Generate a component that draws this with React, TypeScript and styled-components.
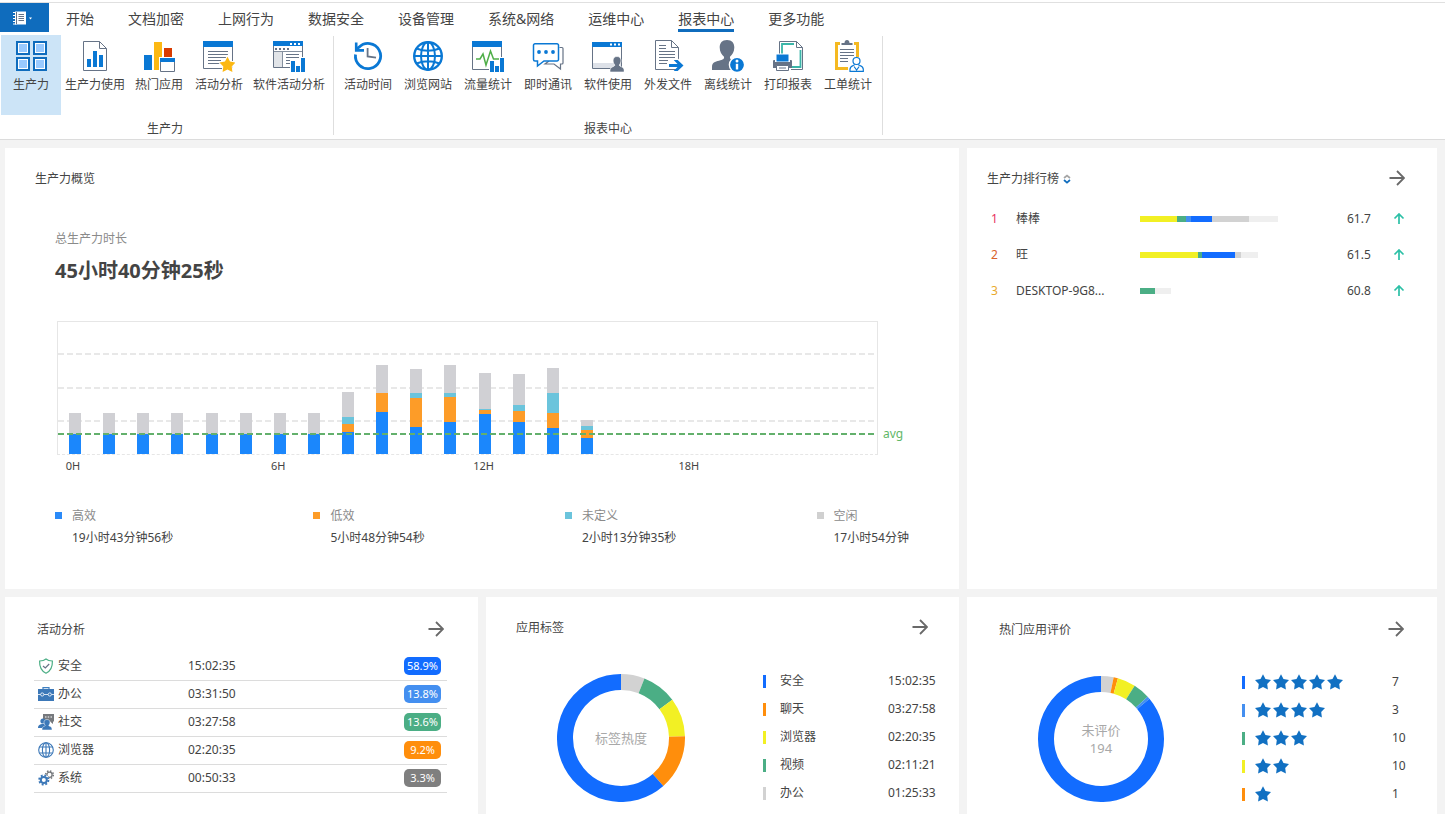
import React from "react";
import styled, { createGlobalStyle } from "styled-components";

const color = {
  text: "#444444",
  muted: "#8a8a8a",
  brand: "#0f6cbd",
  icon: "#0a78d4",
  slate: "#667386",
  blue: "#126cff",
  lightBlue: "#448ff0",
  green: "#4bae85",
  yellow: "#f2f024",
  orange: "#ff8e0c",
  gray: "#d2d2d2",
  pale: "#efefef",
};

const GlobalStyle = createGlobalStyle`
  *, *::before, *::after { box-sizing: border-box; }
  body {
    margin: 0;
    background: #f3f3f3;
    color: ${color.text};
    font: 12px/16px "Noto Sans", "Noto Sans CJK SC", sans-serif;
  }
  button { font: inherit; color: inherit; border: 0; padding: 0; background: none; cursor: pointer; }
  h2, p, dl, dd { margin: 0; font-size: inherit; font-weight: inherit; }
  table { border-collapse: collapse; table-layout: fixed; width: 100%; }
  td { padding: 0; }
  svg { display: block; }
`;

/* ---------- page frame ---------- */

const Page = styled.div`
  min-height: 100vh;
  display: flex;
  flex-direction: column;
`;

const Ribbon = styled.header`
  background: #fff;
  padding-top: 2px;
  border-bottom: 1px solid #dcdcdc;
`;

const MenuBar = styled.nav`
  display: flex;
  height: 33px;
  border-top: 1px solid #e0e0e0;
  padding-bottom: 3px;
`;

const FileButton = styled.button`
  width: 49px;
  padding-left: 12px;
  background: ${color.brand};
`;

const MenuItem = styled.button`
  display: flex;
  padding: 0 17px;
  font-size: 14px;
  line-height: 32px;
`;

const MenuLabel = styled.span<{ $active?: boolean }>`
  height: 29px;
  border-bottom: 3px solid ${(p) => (p.$active ? color.brand : "transparent")};
`;

const Groups = styled.div`
  display: flex;
  padding-left: 1px;
`;

const Group = styled.section<{ $first?: boolean }>`
  height: 104px;
  padding: 0 5px 0 ${(p) => (p.$first ? 0 : 4)}px;
  background: linear-gradient(#dedede, #dedede) right 1px / 1px 99px no-repeat;
`;

const Tools = styled.div`
  display: flex;
`;

const Tool = styled.button<{ $active?: boolean }>`
  display: flex;
  flex-direction: column;
  align-items: center;
  gap: 5px;
  min-width: 60px;
  height: 80px;
  padding: 5px 4px 0;
  white-space: nowrap;
  background: ${(p) => (p.$active ? "#cce4f7" : "transparent")};
`;

const GroupName = styled.p`
  text-align: center;
  padding-top: 6px;
`;

const Dashboard = styled.main`
  flex: 1;
  display: grid;
  grid-template-columns: 473fr 473fr 470fr;
  grid-template-rows: auto 1fr;
  gap: 8px;
  padding: 8px 8px 0 5px;
`;

const Card = styled.section<{ $wide?: boolean; $pad: string }>`
  background: #fff;
  min-width: 0;
  grid-column: ${(p) => (p.$wide ? "span 2" : "auto")};
  padding: ${(p) => p.$pad};
`;

const CardHead = styled.header<{ $inset: string }>`
  display: flex;
  align-items: center;
  justify-content: space-between;
  height: 24px;
  padding: ${(p) => p.$inset};
`;

const CardTitle = styled.h2`
  display: flex;
  align-items: center;
  gap: 4px;
  padding-top: 2px;
`;

/* ---------- overview ---------- */

const Overview = styled.div`
  padding: 41px 20px 0;
`;

const Caption = styled.p`
  color: ${color.muted};
`;

const Total = styled.p`
  font-size: 20px;
  line-height: 28px;
  font-weight: 700;
  margin-top: 10px;
`;

const ChartRow = styled.div`
  display: flex;
  gap: 5px;
  margin: 36px 0 0 2px;
  padding-right: 4px;
`;

const ChartBody = styled.div`
  flex: 1;
`;

const Plot = styled.div`
  position: relative;
  display: flex;
  align-items: flex-end;
  height: 134px;
  border: 1px solid #e6e6e6;
  border-bottom-style: dashed;
`;

const GridLine = styled.i<{ $top: number; $tone: string }>`
  position: absolute;
  left: 0;
  right: 0;
  top: ${(p) => p.$top}px;
  height: 2px;
  background: repeating-linear-gradient(90deg, ${(p) => p.$tone} 0 6px, transparent 6px 9px);
`;

// Positioned so that the bars paint over the grid lines that precede them.
const Hour = styled.div`
  position: relative;
  flex: 1;
  display: flex;
  flex-direction: column;
  align-items: center;
`;

const Segment = styled.span<{ $tone: string }>`
  width: 12px;
  background: ${(p) => p.$tone};
`;

const Axis = styled.div`
  display: flex;
  margin-top: 3px;
  font-size: 11px;
`;

const Tick = styled.div`
  flex: 1;
`;

const TickLabel = styled.span`
  display: block;
  width: 32px;
  text-align: center;
`;

const AvgLabel = styled.span`
  color: #5fb768;
  margin-top: 105px;
  width: 22px;
`;

const Summary = styled.dl`
  display: flex;
  justify-content: space-between;
  margin-top: 34px;
`;

const SummaryItem = styled.div<{ $tone: string }>`
  padding-left: 17px;
  background: linear-gradient(${(p) => p.$tone}, ${(p) => p.$tone}) 0 4px / 7px 7px no-repeat;
  dt { color: ${color.muted}; }
  dd { margin-top: 6px; }
`;

/* ---------- ranking ---------- */

const RankTable = styled.table`
  margin-top: 11px;
  td { height: 36px; }
`;

const Rank = styled.td<{ $tone: string }>`
  width: 29px;
  padding-right: 14px;
  text-align: center;
  color: ${(p) => p.$tone};
`;

const Name = styled.td`
  width: 124px;
`;

const Score = styled.td`
  width: 46px;
`;

const Trend = styled.td`
  width: 12px;
`;

const Meter = styled.div`
  display: flex;
  height: 6px;
`;

const MeterPart = styled.span<{ $tone: string }>`
  background: ${(p) => p.$tone};
`;

/* ---------- activity ---------- */

const ActivityTable = styled.table`
  margin-top: 11px;
  td { height: 28px; border-bottom: 1px solid #dcdcdc; }
`;

const ActivityName = styled.td`
  width: 154px;
  padding-left: 4px;
`;

const IconText = styled.span`
  display: flex;
  align-items: center;
  gap: 4px;
`;

const BadgeCell = styled.td`
  width: 43px;
  padding-right: 6px;
`;

const Badge = styled.span<{ $tone: string }>`
  display: block;
  height: 18px;
  border-radius: 5px;
  color: #fff;
  font-size: 11px;
  line-height: 18px;
  text-align: center;
  background: ${(p) => p.$tone};
`;

/* ---------- donuts ---------- */

const DonutRow = styled.div<{ $gap: number; $top: number }>`
  display: flex;
  justify-content: space-between;
  padding-left: ${(p) => p.$gap}px;
  margin-top: ${(p) => p.$top}px;
`;

const DonutBox = styled.div`
  display: grid;
  place-items: center;
  width: 128px;
  height: 128px;
  margin-top: 7px;
  flex: none;
  > * { grid-area: 1 / 1; }
`;

const DonutText = styled.p`
  color: #a8a8a8;
  font-size: 13px;
  line-height: 18px;
  text-align: center;
`;

const LegendTable = styled.table<{ $width: number }>`
  width: ${(p) => p.$width}px;
  align-self: flex-start;
  td { height: 28px; }
`;

const KeyCell = styled.td<{ $width: number }>`
  width: ${(p) => p.$width}px;
`;

const Key = styled.span<{ $tone: string }>`
  display: block;
  width: 3px;
  height: 13px;
  background: ${(p) => p.$tone};
`;

const ValueCell = styled.td<{ $width: number }>`
  width: ${(p) => p.$width}px;
`;

const Stars = styled.span`
  display: flex;
  gap: 2px;
`;

/* ---------- ribbon icons ---------- */

const S = color.slate;
const B = color.icon;

const RibbonSvg = ({ children }: { children: React.ReactNode }) => (
  <svg width="32" height="32" viewBox="0 0 32 32" fill="none" aria-hidden="true">
    {children}
  </svg>
);

const lines = (ys: number[], x1: number, x2: number) => (
  <path d={ys.map((y) => `M${x1} ${y}H${x2}`).join("")} stroke={S} strokeWidth="1" />
);

const STAR = "M8 0.2L10.5 5L16 6L12.2 9.9L12.9 15.5L8 13L3.1 15.5L3.8 9.9L0 6L5.5 5Z";

const TilesIcon = () => (
  <RibbonSvg>
    {[2, 19].map((x) =>
      [2, 18].map((y) => (
        <g key={`${x}-${y}`}>
          <rect x={x} y={y} width="12" height="12" fill="#fff" stroke={color.brand} strokeWidth="2" />
          <rect x={x + 2} y={y + 2} width="8" height="8" fill="#99caff" />
        </g>
      ))
    )}
  </RibbonSvg>
);

const ReportIcon = () => (
  <RibbonSvg>
    <path d="M4.5 1.5H20.5L27.5 8.5V30.5H4.5Z" fill="#fff" stroke={S} />
    <path d="M20.5 1.5V8.5H27.5" stroke={S} />
    <path d="M8 19h4v8H8zM14 11h4v16h-4zM20 15h4v12h-4z" fill={B} />
  </RibbonSvg>
);

const HotAppIcon = () => (
  <RibbonSvg>
    <path d="M1 15h8v15H1z" fill={B} />
    <path d="M11 2h8v28h-8z" fill="#fcb813" />
    <path d="M21 8h8v9h-8z" fill="#d83b01" />
    <path d="M16 17h16v15H16z" fill="#fff" />
    <path d="M17.5 18.5h14v13h-14z" fill="#fff" stroke={S} />
    <path d="M17 18h15v4H17z" fill={B} />
  </RibbonSvg>
);

const ActivityIcon = () => (
  <RibbonSvg>
    <path d="M.5 1.5h29v27H.5z" fill="#fff" stroke={S} />
    <path d="M0 1h30v6H0z" fill={B} />
    {lines([11.5, 14.5, 17.5], 5, 25)}
    {lines([20.5, 23.5], 5, 18)}
    <g transform="translate(16.5 16.5)">
      <path d={STAR} fill="#fcb813" stroke="#fff" strokeWidth="2" />
      <path d={STAR} fill="#fcb813" />
    </g>
  </RibbonSvg>
);

const MiniBars = () => (
  <>
    <path d="M17 20h6v5h4v-8h5v15H17z" fill="#fff" />
    <path d="M18 21h4v11h-4zM23 26h4v6h-4zM28 18h4v14h-4z" fill={B} />
  </>
);

const SoftwareActivityIcon = () => (
  <RibbonSvg>
    <path d="M.5 1.5h29v26H.5z" fill="#fff" stroke={S} />
    <path d="M1 12h8v15H1z" fill="#e1e4e8" />
    <path d="M0 1h30v5H0z" fill={B} />
    <path d="M17 3h2v2h-2zM21 3h2v2h-2zM25 3h2v2h-2z" fill="#fff" />
    <path d="M2 8h2v2H2zM6 8h2v2H6zM10 8h2v2h-2zM14 8h2v2h-2z" fill={S} />
    <path d="M1 11.5H29M9.5 12V27" stroke={S} strokeWidth=".8" />
    {lines([14.5, 17.5], 13, 26)}
    {lines([20.5, 23.5], 13, 17)}
    <MiniBars />
  </RibbonSvg>
);

const HistoryIcon = () => (
  <RibbonSvg>
    <path d="M3.5 14.5A12.6 12.6 0 1 0 7 7.2L4 9.5" stroke={B} strokeWidth="2.8" />
    <path d="M4.2 2.5V10.4H12" stroke={B} strokeWidth="2.6" />
    <path d="M15.6 8V16.4L24 17.6" stroke={S} strokeWidth="1.8" />
  </RibbonSvg>
);

const GlobeIcon = () => (
  <RibbonSvg>
    <g stroke={B} strokeWidth="2">
      <circle cx="16" cy="16" r="13.8" strokeWidth="2.4" />
      <ellipse cx="16" cy="16" rx="7" ry="13.8" />
      <path d="M16 2V30M2 16H30M4.5 8.5Q16 13 27.5 8.5M4.5 23.5Q16 19 27.5 23.5" />
    </g>
  </RibbonSvg>
);

const TrafficIcon = () => (
  <RibbonSvg>
    <path d="M.5 1.5h29v28H.5z" fill="#fff" stroke={S} />
    <path d="M0 1h30v6H0z" fill={B} />
    <path d="M4 19H8L11 14L14 25L18.5 11L21.5 19H27" stroke="#4fae48" strokeWidth="1.5" />
    <MiniBars />
  </RibbonSvg>
);

const ChatIcon = () => (
  <RibbonSvg>
    <path d="M27.5 7.5H30a1 1 0 0 1 1 1V23a1 1 0 0 1-1 1H28.5V29L22 24H13L17 21" stroke={S} strokeWidth="1.2" fill="#fff" />
    <path
      d="M3 3.8H25a1.5 1.5 0 0 1 1.5 1.5V19.5a1.5 1.5 0 0 1-1.5 1.5H12L5.5 26V21H3a1.5 1.5 0 0 1-1.5-1.5V5.3A1.5 1.5 0 0 1 3 3.8Z"
      fill="#fff"
      stroke={B}
      strokeWidth="1.5"
    />
    <g fill={B}>
      <circle cx="7" cy="12" r="1.9" />
      <circle cx="14" cy="12" r="1.9" />
      <circle cx="21" cy="12" r="1.9" />
    </g>
  </RibbonSvg>
);

const SoftwareUseIcon = () => (
  <RibbonSvg>
    <path d="M.5 2.5h29v26H.5z" fill="#fff" stroke={S} />
    <path d="M1 23h28v5H1z" fill="#dde1e8" />
    <path d="M0 2h30v5H0z" fill={B} />
    <path d="M18 3.5h2v2h-2zM22 3.5h2v2h-2zM26 3.5h2v2h-2z" fill="#fff" />
    <path
      d="M25 16.5c2.9 0 4 2 4 4.3 0 1.8-.9 3.3-1.9 4.2 0 1.8 5.1 1.6 5.1 5V32H18v-2c0-3.4 5-3.2 5-5-1-.9-1.9-2.4-1.9-4.2 0-2.3 1-4.3 3.9-4.3Z"
      fill={S}
      stroke="#fff"
      strokeWidth=".6"
    />
  </RibbonSvg>
);

const SendFileIcon = () => (
  <RibbonSvg>
    <path d="M3.5 .5H19.5L26.5 7.5V29.5H3.5Z" fill="#fff" stroke={S} />
    <path d="M19.5 .5V7.5H26.5" stroke={S} />
    {lines([5.5, 8.5], 7, 14)}
    {lines([11.5, 14.5, 17.5], 7, 23)}
    {lines([20.5, 23.5], 7, 16)}
    <path d="M15 23h9M24 18l8 7.5-8 7" stroke="#fff" strokeWidth="2" />
    <path d="M17 24h8.5l-3.8-4h4l5.8 5.5-5.8 5.5h-4l3.8-4H17z" fill={B} />
  </RibbonSvg>
);

const OfflineIcon = () => (
  <RibbonSvg>
    <path
      d="M15 0c5 0 7.3 3 7.3 7.5 0 4-2 7.5-4.3 9.2-.5 2 .8 3 4 4 3 1 5.5 2 5.5 6V30H0v-3c0-4.5 3-5.3 7-6.3 4-1 5.5-2 5-4C9.7 15 7.7 11.5 7.7 7.5 7.7 3 10 0 15 0Z"
      fill={S}
    />
    <circle cx="25" cy="24.8" r="7.6" fill={B} stroke="#fff" strokeWidth="1.4" />
    <circle cx="25" cy="21" r="1.5" fill="#fff" />
    <path d="M25 23.8V29.5" stroke="#fff" strokeWidth="2.4" />
  </RibbonSvg>
);

const PrintIcon = () => (
  <RibbonSvg>
    <path d="M7.5 14V1.5H24.5L30.5 7.5V29.5H19" fill="#fff" stroke={S} />
    <path d="M10 14V4H22M28.5 10V27H20" stroke="#3ab5a8" strokeWidth="1.8" />
    <path d="M24.5 1.5V7.5H30.5" stroke={S} />
    <path d="M0 20h20v9H0z" fill="#fff" />
    <path d="M4 14h13v8H4z" fill={B} stroke="#fff" />
    <path d="M1 21a1 1 0 0 1 1-1h1v2h15v-2h1a1 1 0 0 1 1 1v7H1z" fill={S} />
    <path d="M4.5 25.5h12v5h-12z" fill="#fff" stroke={S} />
    <path d="M7 28h7" stroke={S} />
  </RibbonSvg>
);

const TicketIcon = () => (
  <RibbonSvg>
    <path d="M4.5 3.5h21v25h-21z" fill="#fff" stroke="#f5b921" strokeWidth="3" />
    <path d="M8 2h14v4H8z" fill="#fff" />
    <path d="M9.5 5V3h3c0-2 1-3 2.500-3s2.500 1 2.500 3h3v2z" fill={S} />
    {lines([9.5, 12.5, 15.5], 8, 22)}
    {lines([18.5, 21.5], 8, 18)}
    <path d="M16 17h16v15H16z" fill="#fff" />
    <circle cx="24.5" cy="21" r="3.5" stroke={B} strokeWidth="1.2" />
    <path
      d="M22.8 24.5C22 25.8 18 25.7 18 29.2V31.3H31.3V29.2C31.3 25.7 27 25.8 26.2 24.5M22 26.5L24.6 30L27.2 26.5"
      stroke={B}
      strokeWidth="1.2"
    />
  </RibbonSvg>
);

/* ---------- small icons ---------- */

const SmallSvg = ({ children }: { children: React.ReactNode }) => (
  <svg width="16" height="16" viewBox="0 0 16 16" fill="none" aria-hidden="true">
    {children}
  </svg>
);

const ShieldIcon = () => (
  <SmallSvg>
    <path
      d="M8 1C6.5 2.3 4 3 1.6 3 1.4 8.5 2.8 12.8 8 15.2 13.2 12.8 14.6 8.5 14.4 3 12 3 9.5 2.3 8 1Z"
      stroke="#4bae85"
      strokeWidth="1.2"
    />
    <path d="M5 8L7.3 10L11.2 6" stroke={S} strokeWidth="1.2" />
  </SmallSvg>
);

const BriefcaseIcon = () => (
  <SmallSvg>
    <path d="M5 3V1.6H11V3" stroke="#3f7fc0" strokeWidth="1.2" />
    <path d="M0 3h16v12H0z" fill="#3c78b8" />
    <g stroke="#fff" strokeWidth=".8">
      <path d="M0 8.5H2.5M6 8.5H10M13.5 8.5H16" />
      <circle cx="4.2" cy="8.5" r="1.6" />
      <circle cx="11.8" cy="8.5" r="1.6" />
    </g>
  </SmallSvg>
);

const SocialIcon = () => (
  <SmallSvg>
    <path d="M5 0h11v7.5h-1V10l-3-2.5H5z" fill="#76797d" />
    <path d="M7 3h1.5M9.7 3h1.5M12.5 3H14" stroke="#fff" />
    <circle cx="5" cy="7" r="2.6" fill="#3c78b8" />
    <path d="M0 14c0-3 2-4 5-4s3 1 3 4z" fill="#3c78b8" />
    <path
      d="M9 5.5c2 0 3 1.2 3 2.8s-.8 2.6-1.3 3.2c.4 1 3.3.8 3.3 3.5v1H4v-1c0-2.7 2.9-2.5 3.3-3.5C6.8 10.9 6 9.9 6 8.3s1-2.8 3-2.8Z"
      fill="#3c78b8"
      stroke="#fff"
      strokeWidth=".5"
    />
  </SmallSvg>
);

const SmallGlobeIcon = () => (
  <SmallSvg>
    <g stroke="#3c78b8" strokeWidth="1.1">
      <circle cx="8" cy="8" r="7.3" />
      <ellipse cx="8" cy="8" rx="3.6" ry="7.3" />
      <path d="M8 .7V15.3M1.5 5H14.5M1.5 11H14.5" />
    </g>
  </SmallSvg>
);

const GearsIcon = () => (
  <SmallSvg>
    <circle cx="11.5" cy="4.8" r="3.8" stroke="#76797d" strokeWidth="1.6" strokeDasharray="1.5 1.48" />
    <circle cx="11.5" cy="4.8" r="2.6" stroke="#76797d" strokeWidth="1.3" />
    <circle cx="5.8" cy="10" r="5.6" fill="#fff" />
    <circle cx="5.8" cy="10" r="4.6" stroke="#3c78b8" strokeWidth="1.9" strokeDasharray="1.9 1.713" />
    <circle cx="5.8" cy="10" r="3" stroke="#3c78b8" strokeWidth="2" />
  </SmallSvg>
);

const FileMenuIcon = () => (
  <svg width="20" height="14" viewBox="0 0 20 14" fill="none" aria-hidden="true">
    <path d="M3 .5h11v13H3z" fill="#fff" />
    <path d="M6.5 3.5h5.5M6.5 5.5h5.5M6.5 7.5h5.5M6.5 9.5h5.5" stroke={S} />
    <path d="M1 1.5h3M1 4.5h3M1 7.5h3M1 10.5h3M1 13h3" stroke="#fff" />
    <path d="M4.5 1v12" stroke={S} />
    <path d="M17 6.5h3l-1.5 2z" fill="#fff" />
  </svg>
);

const ArrowRight = () => (
  <svg width="16" height="16" viewBox="0 0 16 16" fill="none" stroke="#696969" strokeWidth="1.8" aria-hidden="true">
    <path d="M.5 8H15M8 1L15 8L8 15" />
  </svg>
);

const SortIcon = () => (
  <svg width="8" height="10" viewBox="0 0 8 10" fill="none" strokeWidth="1.7" aria-hidden="true">
    <path d="M1 4L4 1.5L7 4" stroke="#a5a5a5" />
    <path d="M1 6L4 8.7L7 6" stroke={color.brand} />
  </svg>
);

const UpIcon = () => (
  <svg width="12" height="12" viewBox="0 0 12 12" fill="none" stroke="#2cc0a6" strokeWidth="1.7" role="img" aria-label="上升">
    <path d="M6 11V1M1.5 5.5L6 1L10.5 5.5" />
  </svg>
);

/* ---------- data ---------- */

const menus = ["开始", "文档加密", "上网行为", "数据安全", "设备管理", "系统&网络", "运维中心", "报表中心", "更多功能"];

const groups = [
  {
    name: "生产力",
    tools: [
      ["生产力", TilesIcon],
      ["生产力使用", ReportIcon],
      ["热门应用", HotAppIcon],
      ["活动分析", ActivityIcon],
      ["软件活动分析", SoftwareActivityIcon],
    ],
  },
  {
    name: "报表中心",
    tools: [
      ["活动时间", HistoryIcon],
      ["浏览网站", GlobeIcon],
      ["流量统计", TrafficIcon],
      ["即时通讯", ChatIcon],
      ["软件使用", SoftwareUseIcon],
      ["外发文件", SendFileIcon],
      ["离线统计", OfflineIcon],
      ["打印报表", PrintIcon],
      ["工单统计", TicketIcon],
    ],
  },
] as { name: string; tools: [string, React.FC][] }[];

const chartTones = ["#d0d0d4", "#6bc4dc", "#fd9c28", "#1b87fc"];

// Idle, undefined, inefficient and efficient amounts for each hour of the day.
const hours: number[][] = [
  ...Array.from({ length: 8 }, () => [21, 0, 0, 20]),
  [25, 7, 8, 22],
  [28, 0, 19, 42],
  [24, 5, 29, 27],
  [28, 4, 25, 32],
  [36, 1, 4, 40],
  [31, 6, 11, 32],
  [25, 20, 15, 26],
  [6, 4, 8, 16],
  ...Array.from({ length: 8 }, () => []),
];

const summary = [
  ["高效", "19小时43分钟56秒", "#2b8af8"],
  ["低效", "5小时48分钟54秒", "#fd9c28"],
  ["未定义", "2小时13分钟35秒", "#6bc4dc"],
  ["空闲", "17小时54分钟", "#d0d0d0"],
];

const { blue, lightBlue, green, yellow, orange, gray, pale } = color;

const ranking: { name: string; tone: string; score: string; parts: [string, number][] }[] = [
  { name: "棒棒", tone: "#e8335f", score: "61.7", parts: [[yellow, 37], [green, 9], [lightBlue, 5], [blue, 21], [gray, 37], [pale, 29]] },
  { name: "旺", tone: "#d9622b", score: "61.5", parts: [[yellow, 58], [green, 4], [blue, 33], [gray, 6], [pale, 17]] },
  { name: "DESKTOP-9G8...", tone: "#e8a92e", score: "60.8", parts: [[green, 15], [pale, 16]] },
];

const activities: [string, string, string, string, React.FC][] = [
  ["安全", "15:02:35", "58.9%", blue, ShieldIcon],
  ["办公", "03:31:50", "13.8%", lightBlue, BriefcaseIcon],
  ["社交", "03:27:58", "13.6%", green, SocialIcon],
  ["浏览器", "02:20:35", "9.2%", orange, SmallGlobeIcon],
  ["系统", "00:50:33", "3.3%", "#7f7f7f", GearsIcon],
];

const tags = [
  ["安全", "15:02:35", blue],
  ["聊天", "03:27:58", orange],
  ["浏览器", "02:20:35", yellow],
  ["视频", "02:11:21", green],
  ["办公", "01:25:33", gray],
];

const ratings: [number, number, string][] = [
  [5, 7, blue],
  [4, 3, lightBlue],
  [3, 10, green],
  [2, 10, yellow],
  [1, 1, orange],
];

/* ---------- components ---------- */

// Ring chart; each slice runs clockwise from the previous end angle to its own.
const Donut = ({ radius, slices }: { radius: number; slices: [string, number][] }) => {
  const mid = radius - 8;
  const point = (deg: number) => {
    const a = (deg * Math.PI) / 180;
    return `${(64 + mid * Math.sin(a)).toFixed(2)} ${(64 - mid * Math.cos(a)).toFixed(2)}`;
  };
  return (
    <svg width="128" height="128" viewBox="0 0 128 128" fill="none" strokeWidth="16" aria-hidden="true">
      {slices.map(([tone, end], i) => {
        const start = i ? slices[i - 1][1] : 0;
        return (
          <path
            key={tone}
            d={`M${point(start)}A${mid} ${mid} 0 ${end - start > 180 ? 1 : 0} 1 ${point(end)}`}
            stroke={tone}
          />
        );
      })}
    </svg>
  );
};

type HeadProps = { title: string; inset?: string; sort?: boolean; more?: boolean };

const Head = ({ title, inset = "0", sort, more = true }: HeadProps) => (
  <CardHead $inset={inset}>
    <CardTitle>
      {title}
      {sort && (
        <button aria-label="排序">
          <SortIcon />
        </button>
      )}
    </CardTitle>
    {more && (
      <button aria-label={`查看${title}`}>
        <ArrowRight />
      </button>
    )}
  </CardHead>
);

export default function App() {
  return (
    <Page>
      <GlobalStyle />
      <Ribbon>
        <MenuBar>
          <FileButton aria-label="文件">
            <FileMenuIcon />
          </FileButton>
          {menus.map((m) => (
            <MenuItem key={m}>
              <MenuLabel $active={m === "报表中心"}>{m}</MenuLabel>
            </MenuItem>
          ))}
        </MenuBar>
        <Groups>
          {groups.map((g, gi) => (
            <Group key={g.name} $first={gi === 0}>
              <Tools>
                {g.tools.map(([label, Icon], i) => (
                  <Tool key={label} $active={gi === 0 && i === 0}>
                    <Icon />
                    {label}
                  </Tool>
                ))}
              </Tools>
              <GroupName>{g.name}</GroupName>
            </Group>
          ))}
        </Groups>
      </Ribbon>

      <Dashboard>
        <Card $wide $pad="18px 30px 43px">
          <Head title="生产力概览" more={false} />
          <Overview>
            <Caption>总生产力时长</Caption>
            <Total>45小时40分钟25秒</Total>
            <ChartRow>
              <ChartBody>
                <Plot>
                  <GridLine $top={31} $tone="#e8e8e8" />
                  <GridLine $top={65} $tone="#e8e8e8" />
                  <GridLine $top={98} $tone="#e8e8e8" />
                  {hours.map((parts, h) => (
                    <Hour key={h}>
                      {parts.map((size, i) => (
                        <Segment key={i} $tone={chartTones[i]} style={{ height: size }} />
                      ))}
                    </Hour>
                  ))}
                  <GridLine $top={111} $tone="#63b06c" />
                </Plot>
                <Axis>
                  {["0H", "6H", "12H", "18H"].map((t) => (
                    <Tick key={t}>
                      <TickLabel>{t}</TickLabel>
                    </Tick>
                  ))}
                </Axis>
              </ChartBody>
              <AvgLabel>avg</AvgLabel>
            </ChartRow>
            <Summary>
              {summary.map(([label, value, tone]) => (
                <SummaryItem key={label} $tone={tone}>
                  <dt>{label}</dt>
                  <dd>{value}</dd>
                </SummaryItem>
              ))}
            </Summary>
          </Overview>
        </Card>

        <Card $pad="18px 32px 20px 20px">
          <Head title="生产力排行榜" sort />
          <RankTable>
            <tbody>
              {ranking.map((r, i) => (
                <tr key={r.name}>
                  <Rank $tone={r.tone}>{i + 1}</Rank>
                  <Name>{r.name}</Name>
                  <td>
                    <Meter>
                      {r.parts.map(([tone, size]) => (
                        <MeterPart key={tone} $tone={tone} style={{ width: size }} />
                      ))}
                    </Meter>
                  </td>
                  <Score>{r.score}</Score>
                  <Trend>
                    <UpIcon />
                  </Trend>
                </tr>
              ))}
            </tbody>
          </RankTable>
        </Card>

        <Card $pad="20px 31px 20px 29px">
          <Head title="活动分析" inset="0 3px" />
          <ActivityTable>
            <tbody>
              {activities.map(([name, time, share, tone, Icon]) => (
                <tr key={name}>
                  <ActivityName>
                    <IconText>
                      <Icon />
                      {name}
                    </IconText>
                  </ActivityName>
                  <td>{time}</td>
                  <BadgeCell>
                    <Badge $tone={tone}>{share}</Badge>
                  </BadgeCell>
                </tr>
              ))}
            </tbody>
          </ActivityTable>
        </Card>

        <Card $pad="18px 22px 0 30px">
          <Head title="应用标签" inset="0 9px 0 0" />
          <DonutRow $gap={41} $top={28}>
            <DonutBox>
              <Donut
                radius={64}
                slices={[[gray, 21.5], [green, 53.3], [yellow, 88.5], [orange, 138.6], [blue, 360]]}
              />
              <DonutText>标签热度</DonutText>
            </DonutBox>
            <LegendTable $width={174}>
              <tbody>
                {tags.map(([name, time, tone]) => (
                  <tr key={name}>
                    <KeyCell $width={17}>
                      <Key $tone={tone} />
                    </KeyCell>
                    <td>{name}</td>
                    <ValueCell $width={49}>{time}</ValueCell>
                  </tr>
                ))}
              </tbody>
            </LegendTable>
          </DonutRow>
        </Card>

        <Card $pad="20px 32px 0">
          <Head title="热门应用评价" inset="0 1px 0 0" />
          <DonutRow $gap={38} $top={27}>
            <DonutBox>
              <Donut
                radius={63}
                slices={[[gray, 11.6], [orange, 15.6], [yellow, 32.3], [green, 47.8], [lightBlue, 50.3], [blue, 360]]}
              />
              <DonutText>
                未评价
                <br />
                194
              </DonutText>
            </DonutBox>
            <LegendTable $width={163}>
              <tbody>
                {ratings.map(([stars, count, tone]) => (
                  <tr key={stars}>
                    <KeyCell $width={13}>
                      <Key $tone={tone} />
                    </KeyCell>
                    <td>
                      <Stars role="img" aria-label={`${stars}星`}>
                        {Array.from({ length: stars }, (_, i) => (
                          <SmallSvg key={i}>
                            <path d={STAR} fill="#1170c2" />
                          </SmallSvg>
                        ))}
                      </Stars>
                    </td>
                    <ValueCell $width={13}>{count}</ValueCell>
                  </tr>
                ))}
              </tbody>
            </LegendTable>
          </DonutRow>
        </Card>
      </Dashboard>
    </Page>
  );
}
